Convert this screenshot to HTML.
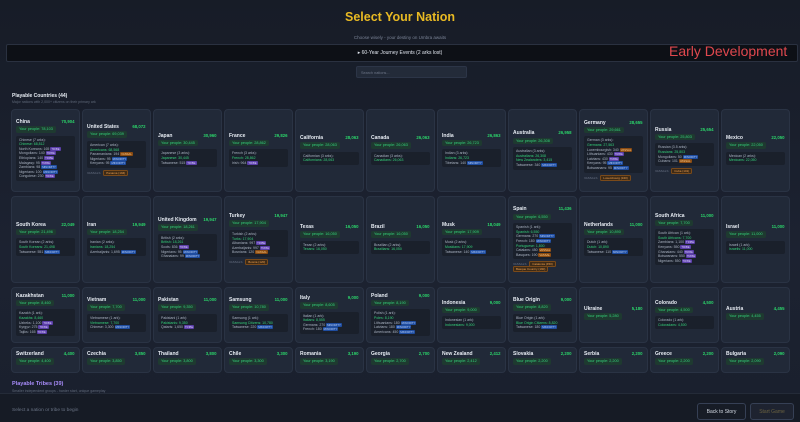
<!DOCTYPE html><html><head><meta charset="utf-8"><style>
*{margin:0;padding:0;box-sizing:border-box}
body{width:800px;height:422px;overflow:hidden;background:linear-gradient(#171c27,#1c2231 60%,#1a202d);font-family:"Liberation Sans",sans-serif;color:#cfd6e2;position:relative}
.t{position:absolute;left:0;width:800px;text-align:center}
.grid{position:absolute;left:11px;top:109px;width:779px;display:grid;grid-template-columns:repeat(11,68.5px);column-gap:2.5px;row-gap:4px;grid-template-rows:83px 87px 56px 26px}
.c{background:#212938;border:1px solid #2a3344;border-radius:4px;padding:3px 4px;display:flex;flex-direction:column;justify-content:center;font-size:3.5px;line-height:4.6px;overflow:hidden}
.h{display:flex;justify-content:space-between;align-items:center;margin-bottom:1.5px}
.h b{font-size:5px;color:#e6ebf2}
.h i{font-style:normal;color:#2bd46a;font-size:4.3px;font-weight:bold}
.p{background:#1e3a30;color:#34d27a;border-radius:2px;padding:1px 3px;align-self:flex-start;font-size:3.8px;margin-bottom:3px}
.b{background:#1a202b;border-radius:2px;padding:2px 3px;color:#aab3c2;white-space:nowrap;overflow:hidden}
.g{color:#34d27a}
.tr,.mi,.or{padding:0 1px;border-radius:1px;font-size:2.8px}
.tr{background:#5b3fa8;color:#d8ccff}
.mi{background:#1f4da0;color:#bcd4ff}
.or{background:#8a4b12;color:#ffcc88}
.v{margin-top:3px;color:#6b7486;font-size:3px}
.v span{background:#3d2a16;border:1px solid #7a4a1a;color:#f0a050;padding:0 2px;border-radius:1.5px;margin-left:2px}
.btn{position:absolute;top:403px;height:17px;border:1px solid #364055;border-radius:3px;font-size:5px;display:flex;align-items:center;justify-content:center}
</style></head><body>
<div class="t" style="top:10px;font-size:12.5px;font-weight:bold;color:#e8b923">Select Your Nation</div>
<div class="t" style="top:35px;font-size:4.5px;color:#7b8496">Choose wisely - your destiny on Umbra awaits</div>
<div class="t" style="top:44px;font-size:4.3px;color:#aeb6c4">Total Humanity: 729,544 &nbsp;|&nbsp; Arks: 76.5</div>
<div style="position:absolute;left:6px;top:44px;width:792px;height:18px;background:#0d1016;border:1px solid #2a3140;border-radius:2px"></div>
<div class="t" style="top:50px;font-size:5px;color:#e0e5ee">▸ 60-Year Journey Events (2 arks lost)</div>
<div style="position:absolute;left:669px;top:43px;font-size:14px;color:#e0484e">Early Development</div>
<div style="position:absolute;left:356px;top:66px;width:111px;height:12px;background:#232b39;border:1px solid #2c3547;border-radius:2px;font-size:3.8px;color:#6d7688;padding:3.5px 4px">Search nations...</div>
<div style="position:absolute;left:12px;top:93px;font-size:5px;font-weight:bold;color:#e6ebf2">Playable Countries (44)</div>
<div style="position:absolute;left:12px;top:100px;font-size:3.5px;color:#5f6879">Major nations with 2,000+ citizens on their primary ark</div>
<div class="grid">
<div class="c"><div class="h"><b>China</b><i>70,904</i></div><div class="p">Your people: 78,103</div><div class="b">Chinese (7 arks):<br><span class="g">Chinese: 68,812</span><br>North Koreans: 165 <span class="tr">TRIBE</span><br>Mongolians: 140 <span class="tr">TRIBE</span><br>Ethiopians: 140 <span class="tr">TRIBE</span><br>Malagasy: 95 <span class="tr">TRIBE</span><br>Zambians: 98 <span class="mi">MINORITY</span><br>Nigerians: 100 <span class="mi">MINORITY</span><br>Congolese: 230 <span class="tr">TRIBE</span></div></div>
<div class="c"><div class="h"><b>United States</b><i>68,072</i></div><div class="p">Your people: 69,039</div><div class="b">American (7 arks):<br><span class="g">Americans: 68,568</span><br>Panamanians: 194 <span class="or">VASSAL</span><br>Nigerians: 95 <span class="mi">MINORITY</span><br>Kenyans: 95 <span class="mi">MINORITY</span></div><div class="v">VASSALS <span>Panama (194)</span></div></div>
<div class="c"><div class="h"><b>Japan</b><i>30,960</i></div><div class="p">Your people: 30,445</div><div class="b">Japanese (3 arks):<br><span class="g">Japanese: 30,445</span><br>Taiwanese: 515 <span class="tr">TRIBE</span></div></div>
<div class="c"><div class="h"><b>France</b><i>29,826</i></div><div class="p">Your people: 28,862</div><div class="b">French (3 arks):<br><span class="g">French: 28,862</span><br>Irish: 964 <span class="tr">TRIBE</span></div></div>
<div class="c"><div class="h"><b>California</b><i>28,063</i></div><div class="p">Your people: 28,063</div><div class="b">Californian (3 arks):<br><span class="g">Californians: 28,063</span></div></div>
<div class="c"><div class="h"><b>Canada</b><i>26,063</i></div><div class="p">Your people: 26,063</div><div class="b">Canadian (3 arks):<br><span class="g">Canadians: 26,063</span></div></div>
<div class="c"><div class="h"><b>India</b><i>26,863</i></div><div class="p">Your people: 26,723</div><div class="b">Indian (3 arks):<br><span class="g">Indians: 26,723</span><br>Tibetans: 140 <span class="mi">MINORITY</span></div></div>
<div class="c"><div class="h"><b>Australia</b><i>26,958</i></div><div class="p">Your people: 26,308</div><div class="b">Australian (3 arks):<br><span class="g">Australians: 26,308</span><br><span class="g">New Zealanders: 3,415</span><br>Taiwanese: 340 <span class="mi">MINORITY</span></div></div>
<div class="c"><div class="h"><b>Germany</b><i>28,655</i></div><div class="p">Your people: 29,661</div><div class="b">German (3 arks):<br><span class="g">Germans: 27,563</span><br>Luxembourgish: 340 <span class="or">VASSAL</span><br>Lithuanians: 430 <span class="tr">TRIBE</span><br>Latvians: 430 <span class="tr">TRIBE</span><br>Kenyans: 95 <span class="mi">MINORITY</span><br>Botswanans: 95 <span class="mi">MINORITY</span></div><div class="v">VASSALS <span>Luxembourg (340)</span></div></div>
<div class="c"><div class="h"><b>Russia</b><i>25,654</i></div><div class="p">Your people: 25,803</div><div class="b">Russian (3.5 arks):<br><span class="g">Russians: 25,803</span><br>Mongolians: 50 <span class="mi">MINORITY</span><br>Cubans: 101 <span class="or">VASSAL</span></div><div class="v">VASSALS <span>Cuba (101)</span></div></div>
<div class="c"><div class="h"><b>Mexico</b><i>22,050</i></div><div class="p">Your people: 22,050</div><div class="b">Mexican (2 arks):<br><span class="g">Mexicans: 22,050</span></div></div>

<div class="c"><div class="h"><b>South Korea</b><i>22,049</i></div><div class="p">Your people: 21,496</div><div class="b">South Korean (2 arks):<br><span class="g">South Koreans: 21,498</span><br>Taiwanese: 551 <span class="mi">MINORITY</span></div></div>
<div class="c"><div class="h"><b>Iran</b><i>19,949</i></div><div class="p">Your people: 18,254</div><div class="b">Iranian (2 arks):<br><span class="g">Iranians: 18,254</span><br>Azerbaijanis: 1,695 <span class="mi">MINORITY</span></div></div>
<div class="c"><div class="h"><b>United Kingdom</b><i>19,947</i></div><div class="p">Your people: 18,261</div><div class="b">British (2 arks):<br><span class="g">British: 18,261</span><br>Scots: 836 <span class="tr">TRIBE</span><br>Nigerians: 95 <span class="mi">MINORITY</span><br>Ghanaians: 99 <span class="mi">MINORITY</span></div></div>
<div class="c"><div class="h"><b>Turkey</b><i>19,947</i></div><div class="p">Your people: 17,904</div><div class="b">Turkish (2 arks):<br><span class="g">Turks: 17,904</span><br>Albanians: 997 <span class="tr">TRIBE</span><br>Azerbaijanis: 997 <span class="tr">TRIBE</span><br>Bosnians: 120 <span class="or">VASSAL</span></div><div class="v">VASSALS <span>Bosnia (120)</span></div></div>
<div class="c"><div class="h"><b>Texas</b><i>16,050</i></div><div class="p">Your people: 16,050</div><div class="b">Texan (2 arks):<br><span class="g">Texans: 16,050</span></div></div>
<div class="c"><div class="h"><b>Brazil</b><i>16,050</i></div><div class="p">Your people: 16,050</div><div class="b">Brazilian (2 arks):<br><span class="g">Brazilians: 16,050</span></div></div>
<div class="c"><div class="h"><b>Musk</b><i>18,049</i></div><div class="p">Your people: 17,909</div><div class="b">Musk (2 arks):<br><span class="g">Muskians: 17,909</span><br>Taiwanese: 140 <span class="mi">MINORITY</span></div></div>
<div class="c"><div class="h"><b>Spain</b><i>11,436</i></div><div class="p">Your people: 6,550</div><div class="b">Spanish (1 ark):<br><span class="g">Spanish: 6,550</span><br>Germans: 270 <span class="mi">MINORITY</span><br>French: 180 <span class="mi">MINORITY</span><br><span class="g">Portuguese: 1,800</span><br>Catalans: 450 <span class="or">VASSAL</span><br>Basques: 190 <span class="or">VASSAL</span></div><div class="v">VASSALS <span>Catalonia (450)</span><br><span style="margin-left:0">Basque Country (190)</span></div></div>
<div class="c"><div class="h"><b>Netherlands</b><i>11,000</i></div><div class="p">Your people: 10,890</div><div class="b">Dutch (1 ark):<br><span class="g">Dutch: 10,890</span><br>Taiwanese: 110 <span class="mi">MINORITY</span></div></div>
<div class="c"><div class="h"><b>South Africa</b><i>11,000</i></div><div class="p">Your people: 7,700</div><div class="b">South African (1 ark):<br><span class="g">South Africans: 7,700</span><br>Zambians: 1,100 <span class="tr">TRIBE</span><br>Kenyans: 550 <span class="tr">TRIBE</span><br>Ghanaians: 440 <span class="tr">TRIBE</span><br>Botswanans: 550 <span class="tr">TRIBE</span><br>Nigerians: 550 <span class="tr">TRIBE</span></div></div>
<div class="c"><div class="h"><b>Israel</b><i>11,000</i></div><div class="p">Your people: 11,000</div><div class="b">Israeli (1 ark):<br><span class="g">Israelis: 11,000</span></div></div>

<div class="c"><div class="h"><b>Kazakhstan</b><i>11,000</i></div><div class="p">Your people: 8,460</div><div class="b">Kazakh (1 ark):<br><span class="g">Kazakhs: 8,460</span><br>Uzbeks: 1,100 <span class="tr">TRIBE</span><br>Kyrgyz: 275 <span class="tr">TRIBE</span><br>Tajiks: 165 <span class="tr">TRIBE</span></div></div>
<div class="c"><div class="h"><b>Vietnam</b><i>11,000</i></div><div class="p">Your people: 7,700</div><div class="b">Vietnamese (1 ark):<br><span class="g">Vietnamese: 7,700</span><br>Chinese: 3,300 <span class="mi">MINORITY</span></div></div>
<div class="c"><div class="h"><b>Pakistan</b><i>11,000</i></div><div class="p">Your people: 9,350</div><div class="b">Pakistani (1 ark):<br><span class="g">Pakistanis: 9,350</span><br>Qataris: 1,650 <span class="tr">TRIBE</span></div></div>
<div class="c"><div class="h"><b>Samsung</b><i>11,000</i></div><div class="p">Your people: 10,780</div><div class="b">Samsung (1 ark):<br><span class="g">Samsung Citizens: 10,780</span><br>Taiwanese: 220 <span class="mi">MINORITY</span></div></div>
<div class="c"><div class="h"><b>Italy</b><i>9,000</i></div><div class="p">Your people: 8,605</div><div class="b">Italian (1 ark):<br><span class="g">Italians: 8,555</span><br>Germans: 270 <span class="mi">MINORITY</span><br>French: 180 <span class="mi">MINORITY</span></div></div>
<div class="c"><div class="h"><b>Poland</b><i>9,000</i></div><div class="p">Your people: 8,190</div><div class="b">Polish (1 ark):<br><span class="g">Poles: 8,190</span><br>Lithuanians: 180 <span class="mi">MINORITY</span><br>Latvians: 180 <span class="mi">MINORITY</span><br>Americans: 450 <span class="mi">MINORITY</span></div></div>
<div class="c"><div class="h"><b>Indonesia</b><i>9,000</i></div><div class="p">Your people: 9,000</div><div class="b">Indonesian (1 ark):<br><span class="g">Indonesians: 9,000</span></div></div>
<div class="c"><div class="h"><b>Blue Origin</b><i>9,000</i></div><div class="p">Your people: 8,820</div><div class="b">Blue Origin (1 ark):<br><span class="g">Blue Origin Citizens: 8,820</span><br>Taiwanese: 180 <span class="mi">MINORITY</span></div></div>
<div class="c"><div class="h"><b>Ukraine</b><i>5,180</i></div><div class="p">Your people: 5,280</div></div>
<div class="c"><div class="h"><b>Colorado</b><i>4,500</i></div><div class="p">Your people: 4,500</div><div class="b">Colorado (1 ark):<br><span class="g">Coloradans: 4,500</span></div></div>
<div class="c"><div class="h"><b>Austria</b><i>4,455</i></div><div class="p">Your people: 4,455</div></div>

<div class="c"><div class="h"><b>Switzerland</b><i>4,400</i></div><div class="p">Your people: 4,400</div></div>
<div class="c"><div class="h"><b>Czechia</b><i>3,850</i></div><div class="p">Your people: 3,850</div></div>
<div class="c"><div class="h"><b>Thailand</b><i>3,800</i></div><div class="p">Your people: 3,800</div></div>
<div class="c"><div class="h"><b>Chile</b><i>3,300</i></div><div class="p">Your people: 3,300</div></div>
<div class="c"><div class="h"><b>Romania</b><i>3,190</i></div><div class="p">Your people: 3,190</div></div>
<div class="c"><div class="h"><b>Georgia</b><i>2,700</i></div><div class="p">Your people: 2,700</div></div>
<div class="c"><div class="h"><b>New Zealand</b><i>2,412</i></div><div class="p">Your people: 2,412</div></div>
<div class="c"><div class="h"><b>Slovakia</b><i>2,200</i></div><div class="p">Your people: 2,200</div></div>
<div class="c"><div class="h"><b>Serbia</b><i>2,200</i></div><div class="p">Your people: 2,200</div></div>
<div class="c"><div class="h"><b>Greece</b><i>2,200</i></div><div class="p">Your people: 2,200</div></div>
<div class="c"><div class="h"><b>Bulgaria</b><i>2,090</i></div><div class="p">Your people: 2,090</div></div>
</div>
<div style="position:absolute;left:12px;top:381px;font-size:5.5px;font-weight:bold;color:#a78bfa">Playable Tribes (39)</div>
<div style="position:absolute;left:12px;top:389px;font-size:3.5px;color:#5f6879">Smaller independent groups - harder start, unique gameplay</div>
<div style="position:absolute;left:0;top:393px;width:800px;height:29px;background:#161b25;border-top:1px solid #242b38"></div>
<div style="position:absolute;left:12px;top:408px;font-size:4.8px;color:#6b7486">Select a nation or tribe to begin</div>
<div class="btn" style="left:697px;width:49px;color:#d6dce6;background:#171c26">Back to Story</div>
<div class="btn" style="left:750px;width:44px;color:#6b6240;background:#1e2330">Start Game</div>
</body></html>
